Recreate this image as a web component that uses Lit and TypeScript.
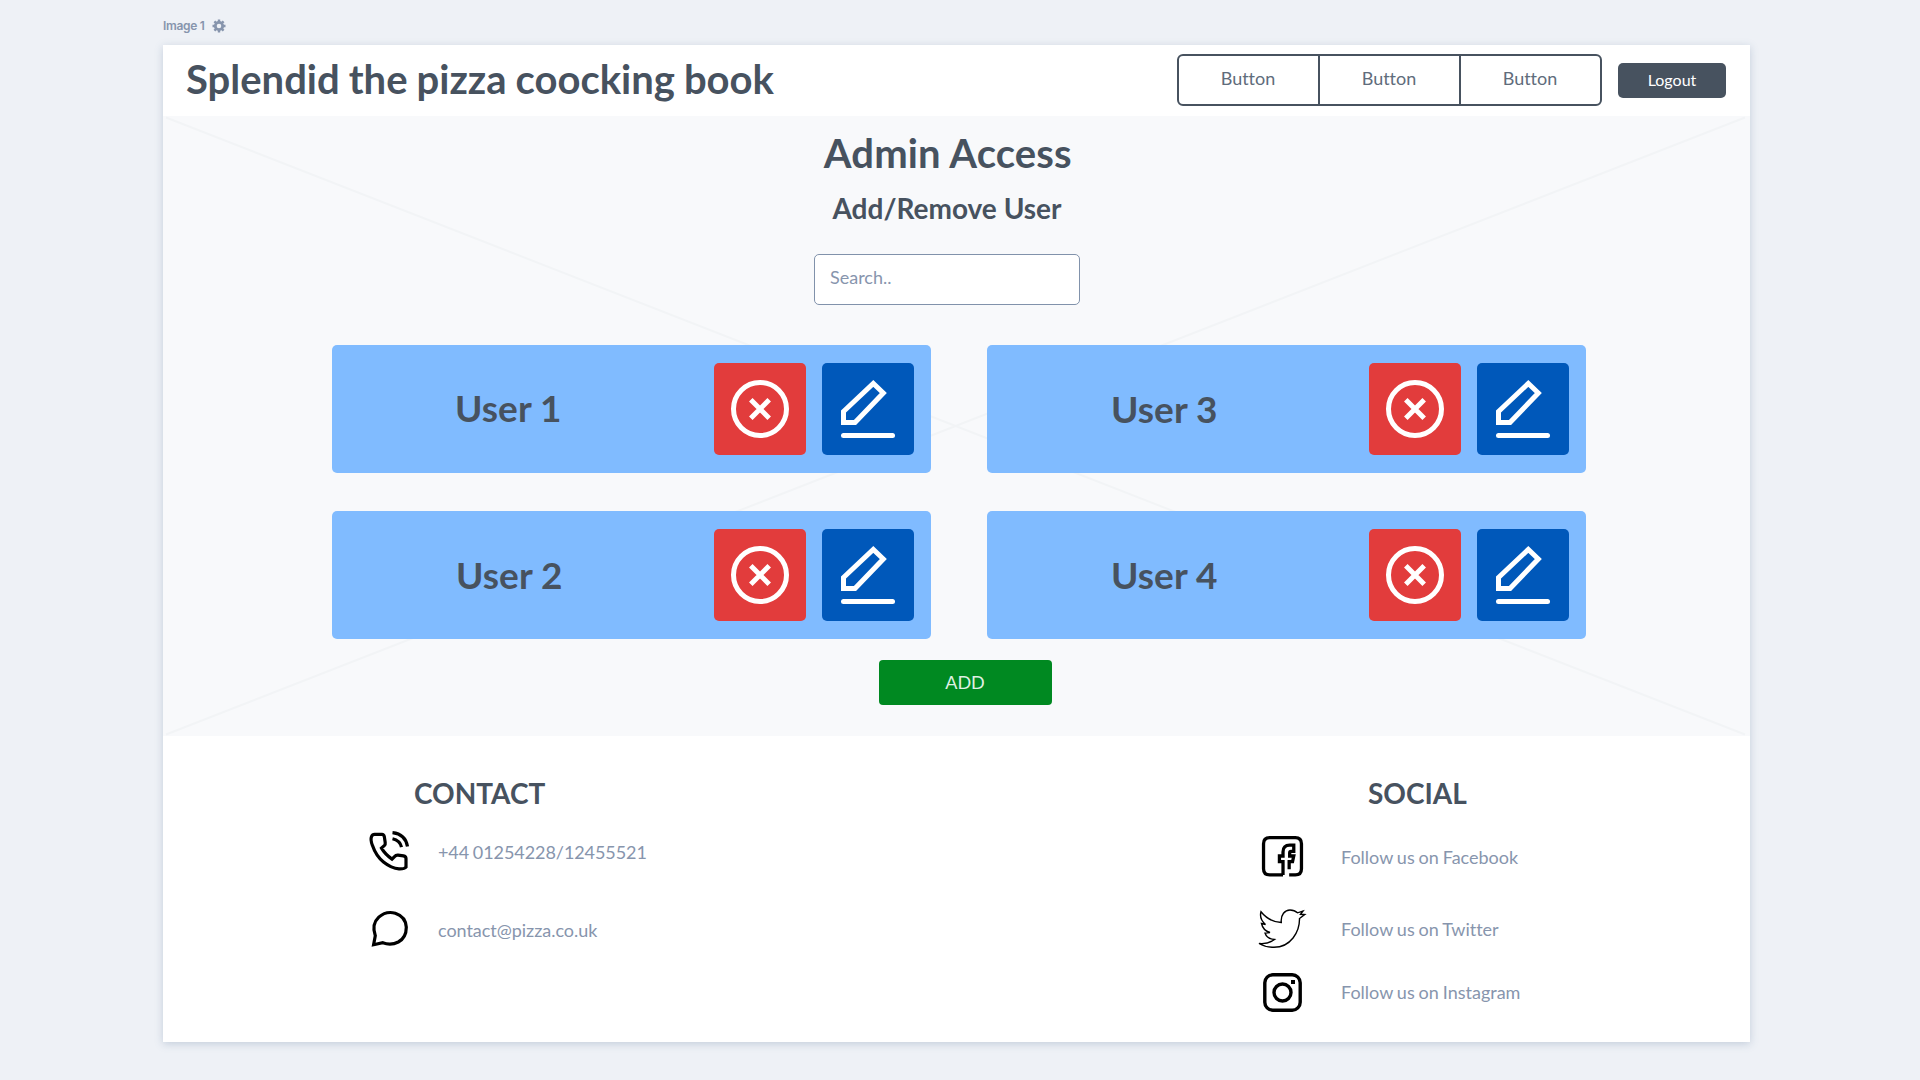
import { LitElement, html, css, svg } from "lit";
import { customElement, property } from "lit/decorators.js";

const phone = svg`<path transform="translate(0.5 -0.4)" d="M2 6C1 8.500 1.800 12 3 15C5 21 8.500 27 14 31.500C19 35.500 24 38 29.500 38.300Q35 38.500 36.500 36.500V28Q36.500 25.800 34 25.300L28.500 24.500Q26.500 24.300 25 26L22.500 28.500Q15.500 23.500 12 17.500L15 14.800Q16 13.800 15.700 12L14.800 6Q14.300 3.700 12.500 3.700H5Q3 3.700 2 6M23 2Q36 3.500 38 16M23 8.200Q30.500 10 32 16.500"/>`;
const chat = svg`<path transform="translate(0.8 1.200)" d="M5.500 25.500Q1.500 14 9 7Q16 0.500 25.500 3Q36 6.500 36.500 17Q36.500 27.500 28.500 31.800Q21 35.500 13 32.500L3.800 34.500Z"/>`;
const facebook = svg`<path d="M21 38.500H8Q2 38.500 2 32.500V8Q2 2 8 2H33Q39 2 39 8V32.500Q39 38.500 33 38.500H27"/><path d="M21 38.500V25.500H17.500V20H21V16Q21 9.500 27.500 9.500H31.500V15.500H29Q27.500 15.500 27.500 17V20H31.500L30.300 25.500H27V33"/>`;
const twitter = svg`<path d="M3 2.800Q11 12.800 23.300 13.500C22.500 5.500 27 1 32 1Q36.500 1 39.500 3.800L45 2L42.500 5.300L46.700 5.500L41.500 9.500C41.800 23 32.500 38.300 16 38.300Q7.500 38.300 1 34.500Q10 35.500 16.500 30.500Q9 30 7 24L12 23.500Q5 21.500 3.500 14.500L7.500 15.500Q1 10 3 2.800Z"/>`;
const instagram = svg`<rect x="1.800" y="1.800" width="35.400" height="35.400" rx="8"/><circle cx="19.500" cy="19.500" r="8.500"/><path d="M28 9H32" stroke-width="4"/>`;

@customElement("user-card")
class UserCard extends LitElement {
  @property() name = "";
  static styles = css`
    :host { display: flex; box-sizing: border-box; height: 128px; padding: 18px 17px 18px 0; gap: 16px; background: #80bbff; border-radius: 5px; align-items: center; }
    .name { flex: 1; padding-left: 124px; font-weight: 700; font-size: 37px; line-height: 44px; letter-spacing: 0.080px; color: #47525f; white-space: nowrap; }
    :host(.raised) .name { padding: 0 0 2px 123px; }
    button { width: 92px; height: 92px; padding: 0; border: 0; border-radius: 5px; display: block; }
    .remove { background: #e23c3c; }
    .edit { background: #0058ba; }
    svg { display: block; fill: none; stroke: #fff; stroke-width: 5; }
  `;
  render() {
    return html`<div class="name">${this.name}</div>
      <button class="remove" aria-label="Remove"><svg width="92" height="92"><circle cx="46" cy="46" r="26.500"/><path d="M36.800 36.800L55.200 55.200M55.200 36.800L36.800 55.200"/></svg></button>
      <button class="edit" aria-label="Edit"><svg width="92" height="92"><path d="M21.500 48.500L51.300 20.500L61.300 30L33 59.500H21.500Z"/><path d="M21.500 72.500H70.500" stroke-linecap="round"/></svg></button>`;
  }
}

@customElement("canvas-label")
class CanvasLabel extends LitElement {
  static styles = css`
    :host { display: flex; height: 45px; padding-top: 18px; box-sizing: border-box; gap: 7px; font: 600 12px/16px Inter, sans-serif; letter-spacing: -0.300px; color: #8795ad; }
    svg { display: block; margin-top: 1px; }
  `;
  render() {
    return html`<span>Image 1</span><svg width="14" height="14" viewBox="-7 -7 14 14"><circle r="3.700" fill="none" stroke="#8795ad" stroke-width="2.800"/>${[0, 45, 90, 135].map((a) => svg`<path d="M0 -6.500V-4M0 4V6.500" stroke="#8795ad" stroke-width="2.400" transform="rotate(${a})"/>`)}</svg>`;
  }
}

@customElement("page-frame")
class PageFrame extends LitElement {
  static styles = css`
    * { box-sizing: border-box; }
    :host { display: flex; flex-direction: column; height: 997px; background: #fff; box-shadow: 0 2px 8px rgba(100, 125, 160, 0.3); font-variant-ligatures: none; }
    h1, h2, h3, p { margin: 0; white-space: nowrap; font-weight: 700; }
    header { height: 71px; display: flex; padding: 9px 24px 0 23px; }
    header h1 { flex: 1; font-size: 40px; line-height: 50px; word-spacing: -0.700px; }
    .group { display: flex; width: 425px; height: 52px; border: 2px solid #47525f; border-radius: 6px; margin-right: 16px; }
    .group span { flex: 1; text-align: center; font-size: 18px; line-height: 44px; padding-right: 1px; color: #606c7b; }
    .group span + span { border-left: 2px solid #47525f; }
    .logout { width: 108px; height: 35px; margin-top: 9px; border-radius: 5px; background: #47525f; color: #fff; font-size: 16px; line-height: 34px; text-align: center; }
    main { height: 620px; position: relative; display: flex; flex-direction: column; background: #f8f9fb; }
    .cross { position: absolute; inset: 0; }
    .body { position: relative; display: flex; flex-direction: column; align-items: center; }
    .admin { font-size: 40px; line-height: 50px; letter-spacing: 0.130px; margin: 12px 17.500px 0 0; }
    .sub { font-size: 28px; line-height: 36px; margin: 12px 19px 0 0; }
    .search { width: 266px; height: 51px; margin: 28px 19px 0 0; padding-left: 15px; background: #fff; border: 1px solid #8192ab; border-radius: 5px; font-size: 18px; line-height: 45px; color: #8795ad; }
    .users { align-self: stretch; display: grid; grid-template-columns: 599px 599px; gap: 38px 56px; margin: 40px 0 0 169px; }
    .add { width: 173px; height: 45px; margin: 21px 0 0 18px; padding-right: 1px; background: #008921; border-radius: 4px; color: #dff0e3; font-size: 18px; line-height: 44px; text-align: center; }
    footer { flex: 1; display: flex; justify-content: space-between; padding: 39px 200px 0 206px; }
    footer h3 { font-size: 28px; line-height: 36px; }
    .contact h3 { margin-left: 45px; }
    .social { width: 291px; }
    .social h3 { margin-left: 109px; }
    .row { display: flex; align-items: center; height: 42px; font-size: 18px; line-height: 22px; color: #8795ad; }
    .row p { font-weight: 400; }
    .contact p { padding-top: 2px; }
    .phone { margin-top: 19px; letter-spacing: -0.070px; word-spacing: -0.800px; }
    .chat { margin-top: 36px; letter-spacing: -0.040px; }
    .social .row { word-spacing: -0.700px; }
    .facebook { margin-top: 25px; }
    .twitter { margin-top: 30px; }
    .instagram { margin-top: 21px; }
    .row svg { display: block; fill: none; stroke: #000; stroke-width: 3.200; overflow: visible; flex: none; }
    .contact svg { margin-right: 29px; }
    .facebook svg { margin: -1px 38px 0 3px; }
    .twitter svg { margin: 0 36px 0 -1px; stroke-width: 1.400; }
    .instagram svg { margin: 0 39px 0 4px; stroke-width: 3.400; }
  `;
  render() {
    return html`
      <header><h1>Splendid the pizza coocking book</h1>
        <div class="group"><span>Button</span><span>Button</span><span>Button</span></div>
        <div class="logout">Logout</div></header>
      <main>
        <svg class="cross" width="1587" height="620"><path d="M3 1.500L1582 618.500M1582 1.500L3 618.500" stroke="#f2f4f6" stroke-width="2"/></svg>
        <div class="body">
          <h1 class="admin">Admin Access</h1><h2 class="sub">Add/Remove User</h2>
          <div class="search">Search..</div>
          <div class="users">${["User 1", "User 3", "User 2", "User 4"].map((n, i) => html`<user-card class=${i === 0 ? "raised" : ""} .name=${n}></user-card>`)}</div>
          <div class="add">ADD</div>
        </div>
      </main>
      <footer>
        <section class="contact"><h3>CONTACT</h3>
          <div class="row phone"><svg width="40" height="40">${phone}</svg><p>+44 01254228/12455521</p></div>
          <div class="row chat"><svg width="40" height="40">${chat}</svg><p>contact@pizza.co.uk</p></div>
        </section>
        <section class="social"><h3>SOCIAL</h3>
          <div class="row facebook"><svg width="41" height="41" viewBox="0.500 0.500 40 40">${facebook}</svg><p>Follow us on Facebook</p></div>
          <div class="row twitter"><svg width="47" height="40">${twitter}</svg><p>Follow us on Twitter</p></div>
          <div class="row instagram"><svg width="39" height="39">${instagram}</svg><p>Follow us on Instagram</p></div>
        </section>
      </footer>`;
  }
}

@customElement("app-root")
class AppRoot extends LitElement {
  static styles = css`
    :host { display: block; box-sizing: border-box; height: 1080px; padding: 0 170px 38px 163px; background: #eef1f6; font-family: Lato, "Liberation Sans", sans-serif; color: #47525f; overflow: hidden; }
  `;
  render() {
    return html`<canvas-label></canvas-label><page-frame></page-frame>`;
  }
}
